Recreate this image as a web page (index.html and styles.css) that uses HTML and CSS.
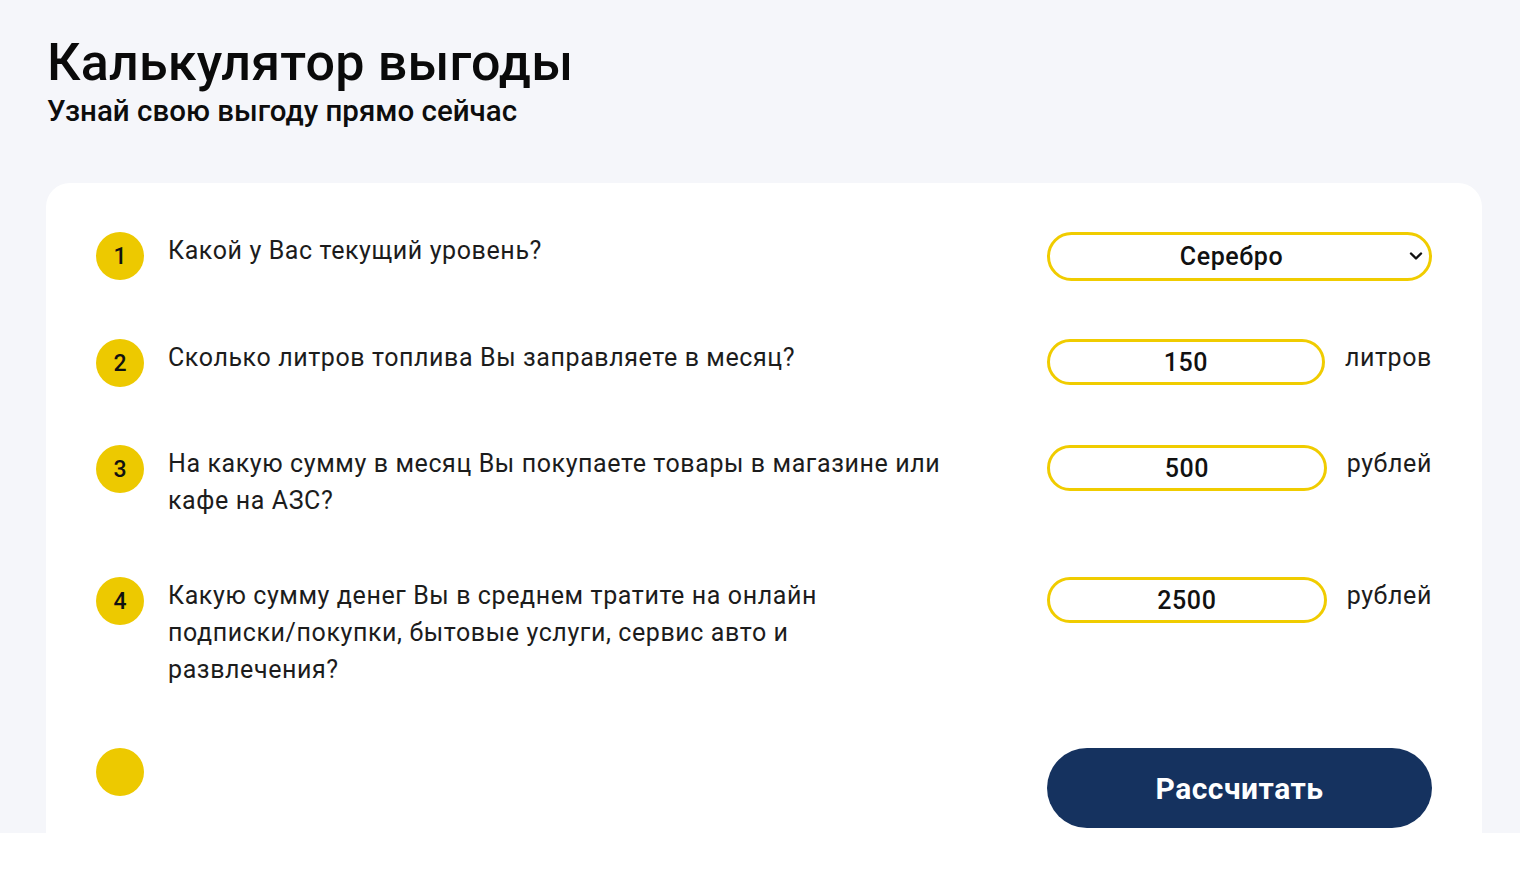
FILE: index.html
```html
<!DOCTYPE html>
<html lang="ru">
<head>
<meta charset="utf-8">
<title>Калькулятор выгоды</title>
<link rel="stylesheet" href="styles.css">
</head>
<body>
<section class="section">
  <header class="head">
    <h1 class="title">Калькулятор выгоды</h1>
    <p class="subtitle">Узнай свою выгоду прямо сейчас</p>
  </header>
  <div class="card">
    <div class="row">
      <div class="num">1</div>
      <div class="question">Какой у Вас текущий уровень?</div>
      <div class="control">
        <div class="select-wrap">
          <select class="select">
            <option>Серебро</option>
            <option>Золото</option>
            <option>Платина</option>
          </select>
          <svg class="chevron" width="14" height="10" viewBox="0 0 14 10"><path d="M2 2.5 L7 7.5 L12 2.5" fill="none" stroke="#111" stroke-width="2.4" stroke-linecap="round" stroke-linejoin="round"/></svg>
        </div>
      </div>
    </div>
    <div class="row">
      <div class="num">2</div>
      <div class="question">Сколько литров топлива Вы заправляете в месяц?</div>
      <div class="control">
        <input class="field" type="text" value="150">
        <span class="unit">литров</span>
      </div>
    </div>
    <div class="row">
      <div class="num">3</div>
      <div class="question">На какую сумму в месяц Вы покупаете товары в магазине или кафе на АЗС?</div>
      <div class="control">
        <input class="field" type="text" value="500">
        <span class="unit">рублей</span>
      </div>
    </div>
    <div class="row">
      <div class="num">4</div>
      <div class="question">Какую сумму денег Вы в среднем тратите на онлайн подписки/&#8288;покупки, бытовые услуги, сервис авто и развлечения?</div>
      <div class="control">
        <input class="field" type="text" value="2500">
        <span class="unit">рублей</span>
      </div>
    </div>
    <div class="row row-last">
      <div class="num"></div>
      <div class="question"></div>
      <div class="control">
        <button class="btn" type="button">Рассчитать</button>
      </div>
    </div>
  </div>
</section>
</body>
</html>
```
FILE: styles.css
```css
* { box-sizing: border-box; }
html, body { margin: 0; padding: 0; background: #ffffff; }
body { font-family: Roboto, "Liberation Sans", Arial, sans-serif; color: #1a1a1a; }

.section {
  background: #f5f6fa;
  height: 833px;
  overflow: hidden;
  padding: 32px 38px 0 46px;
}

.head { padding-left: 1px; }
.title {
  margin: 0;
  font-size: 52px;
  line-height: 62px;
  font-weight: 500;
  letter-spacing: 0.2px;
  color: #0a0a0a;
}
.subtitle {
  margin: 0;
  font-size: 29.5px;
  line-height: 34px;
  font-weight: 500;
  color: #0d0d0d;
}

.card {
  margin-top: 55px;
  background: #ffffff;
  border-radius: 24px;
  padding: 49px 50px 60px 50px;
  display: flex;
  flex-direction: column;
  gap: 58px;
}

.row {
  display: grid;
  grid-template-columns: 48px 785px 1fr;
  column-gap: 24px;
  align-items: start;
}
.row-last { margin-top: 2px; }

.num {
  width: 48px;
  height: 48px;
  border-radius: 50%;
  background: #edc900;
  display: flex;
  align-items: center;
  justify-content: center;
  font-size: 23px;
  font-weight: 500;
  color: #111;
}

.question {
  font-size: 25px;
  line-height: 37px;
  letter-spacing: 0.6px;
  color: #1c1c1c;
}

.control {
  justify-self: end;
  width: 385px;
  display: flex;
  align-items: flex-start;
  gap: 20px;
}

.select-wrap {
  position: relative;
  width: 100%;
}
.select {
  appearance: none;
  -webkit-appearance: none;
  width: 100%;
  height: 49px;
  border: 3px solid #f0cc00;
  border-radius: 25px;
  background: #fff;
  font-family: Roboto, "Liberation Sans", Arial, sans-serif;
  font-size: 25px;
  font-weight: 500;
  letter-spacing: 0.6px;
  color: #111;
  text-align: center;
  text-align-last: center;
  padding: 0 34px 0 18px;
  outline: none;
}
.chevron {
  position: absolute;
  right: 9px;
  top: 19px;
}

.field {
  flex: 1;
  min-width: 0;
  height: 46px;
  border: 3px solid #f0cc00;
  border-radius: 23px;
  background: #fff;
  font-family: Roboto, "Liberation Sans", Arial, sans-serif;
  font-size: 25px;
  font-weight: 500;
  letter-spacing: 0.6px;
  color: #111;
  text-align: center;
  padding: 0 10px;
  outline: none;
}

.unit {
  font-size: 25px;
  line-height: 37px;
  letter-spacing: 0.6px;
  color: #1c1c1c;
}

.btn {
  width: 100%;
  height: 80px;
  border: none;
  border-radius: 40px;
  background: #15325f;
  color: #ffffff;
  font-family: Roboto, "Liberation Sans", Arial, sans-serif;
  font-size: 30px;
  font-weight: 700;
  letter-spacing: 0.5px;
  cursor: pointer;
}
```
